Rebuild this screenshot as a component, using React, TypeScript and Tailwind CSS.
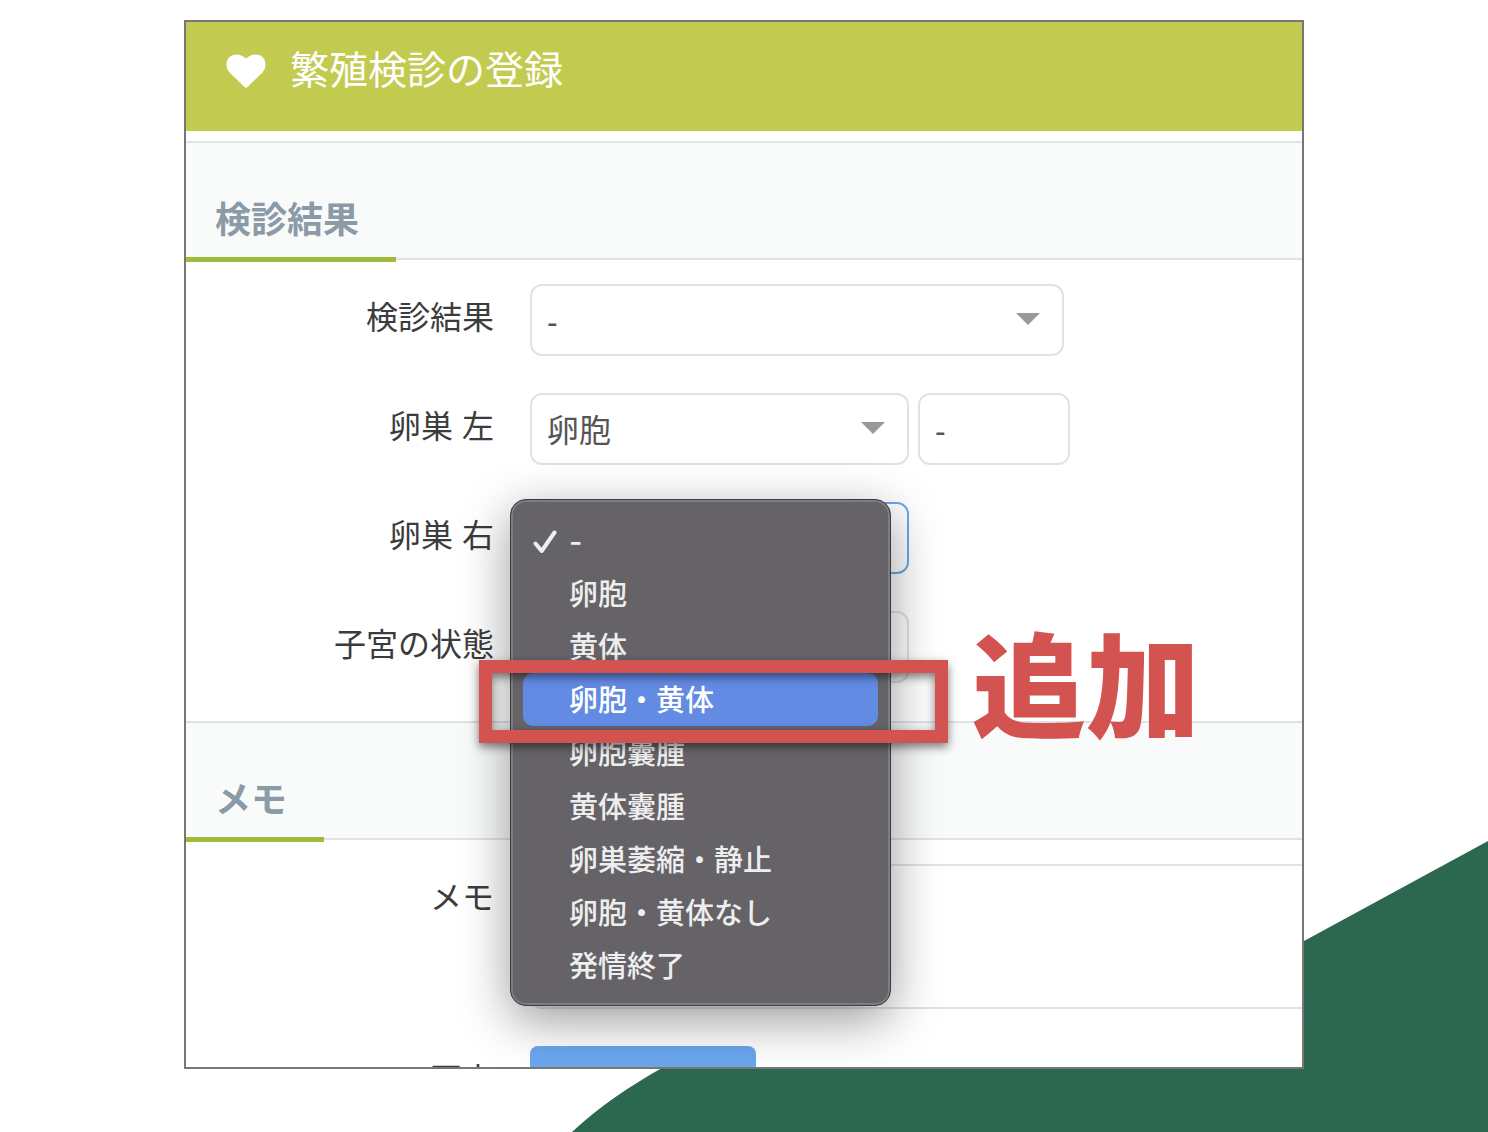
import type { ReactNode } from "react";

const ovaryOptions = [
  "-",
  "卵胞",
  "黄体",
  "卵胞・黄体",
  "卵胞囊腫",
  "黄体囊腫",
  "卵巣萎縮・静止",
  "卵胞・黄体なし",
  "発情終了",
];

function SectionHeading({ children }: { children: ReactNode }) {
  return (
    <div className="flex h-[119px] items-end border-y-2 border-[#dfe3e6] bg-[#f9fafa]">
      <h2 className="-mb-1 border-b-5 border-[#a0ba3a] pr-[37px] pb-2 pl-[29px] text-[36px] leading-[56px] font-bold text-[#8b9aa7]">
        {children}
      </h2>
    </div>
  );
}

function Row({ id, label, children }: { id: string; label: string; children: ReactNode }) {
  return (
    <div className="flex items-start">
      <label
        htmlFor={id}
        className="w-[344px] shrink-0 pt-2.5 pr-9 text-right text-[32px] leading-[48px] text-[#3c3c3c]"
      >
        {label}
      </label>
      {children}
    </div>
  );
}

function Select({
  id,
  options,
  value,
  wide = false,
  focused = false,
}: {
  id: string;
  options: string[];
  value: string;
  wide?: boolean;
  focused?: boolean;
}) {
  return (
    <div className={wide ? "relative w-[534px]" : "relative w-[379px]"}>
      <select
        id={id}
        defaultValue={value}
        className={
          "h-[72px] w-full appearance-none rounded-xl border-2 bg-white px-[15px] pt-1 text-[32px] text-[#555] outline-none " +
          (focused ? "border-[#6aa8ef]" : "border-[#dfe3e6]")
        }
      >
        {options.map((o) => (
          <option key={o}>{o}</option>
        ))}
      </select>
      <svg
        viewBox="0 0 24 12"
        className="pointer-events-none absolute top-[29px] right-6 h-3 w-6 fill-[#999]"
        aria-hidden="true"
      >
        <path d="M0 0h24L12 12z" />
      </svg>
    </div>
  );
}

function Highlight() {
  return (
    <div className="pointer-events-none absolute -top-[13px] -right-[70px] -bottom-[17px] -left-11">
      <div className="absolute inset-0 border-[13px] border-[#d35350] drop-shadow-[0_4px_5px_rgba(0,0,0,0.5)]" />
      <strong className="absolute -top-[88px] left-full ml-6 text-[114px] leading-[232px] font-black whitespace-nowrap text-[#d35350]">
        追加
      </strong>
    </div>
  );
}

function OptionMenu() {
  return (
    <ul
      role="listbox"
      aria-label="卵巣 右"
      className="absolute -top-[3px] -left-5 z-10 flex h-[507px] w-[381px] flex-col rounded-2xl border border-[#3c3c3e] bg-[#656368] px-3 py-[13px] font-[Inter,'Noto_Sans_CJK_JP',sans-serif] text-[29px] font-medium text-[#eeeeee] shadow-[inset_0_0_0_2px_#7e7d80,0_14px_50px_rgba(0,0,0,0.4)]"
    >
      {ovaryOptions.map((o, i) => (
        <li
          key={o}
          role="option"
          aria-selected={i === 0}
          className={
            "relative flex flex-1 items-center rounded-[10px] pt-1 pl-[46px] leading-[48px] " +
            (i === 3 ? "z-10 bg-[#638be4] text-white" : "")
          }
        >
          {i === 0 && (
            <svg
              viewBox="0 0 24 24"
              className="absolute left-2.5 size-6 fill-none stroke-current stroke-[4]"
              strokeLinecap="round"
              strokeLinejoin="round"
              aria-hidden="true"
            >
              <path d="M2.5 13.5 8.7 21 21.5 2.5" />
            </svg>
          )}
          {o}
          {i === 3 && <Highlight />}
        </li>
      ))}
    </ul>
  );
}

export default function App() {
  return (
    <div
      lang="ja"
      className="relative flex h-screen flex-col overflow-hidden bg-white px-[184px] pt-5 pb-[63px] font-['Liberation_Sans','Noto_Sans_CJK_JP',sans-serif]"
    >
      <svg
        viewBox="0 0 916 291"
        className="absolute right-0 bottom-0 h-[291px] w-[916px] fill-[#2b684f]"
        aria-hidden="true"
      >
        <path d="M0 291C28 265 58 245 90 227C250 140 520 215 732 100L916 0V291Z" />
      </svg>

      <main className="relative min-h-0 flex-1 overflow-hidden border-2 border-[#777] bg-white">
        <header className="flex h-[109px] items-center bg-[#c2cb50] pb-3 pl-10 text-white">
          <svg viewBox="0 0 40 34" className="h-[34px] w-10 fill-current" aria-hidden="true">
            <path d="M20 34C19.4 34 18.9 33.500 18.500 33.100L4 19C1.800 16.600.5 14 .5 10.800C.5 4.500 4.500.5 10.600.5 14.200.5 17.600 2.200 20 4.600 22.400 2.200 25.800.5 29.400.5 35.500.5 39.500 4.500 39.500 10.800 39.500 14 38.200 16.600 36 19L21.500 33.100C21.100 33.500 20.600 34 20 34Z" />
          </svg>
          <h1 className="ml-6 text-[39px] leading-[60px]">繁殖検診の登録</h1>
        </header>

        <form className="pt-2.5">
          <SectionHeading>検診結果</SectionHeading>
          <div className="flex flex-col gap-[37px] pt-6 pb-[38px]">
            <Row id="result" label="検診結果">
              <Select id="result" options={["-"]} value="-" wide />
            </Row>
            <Row id="left-ovary" label="卵巣 左">
              <Select id="left-ovary" options={ovaryOptions} value="卵胞" />
              <input
                type="text"
                aria-label="卵巣 左 サイズ"
                defaultValue="-"
                className="ml-[9px] h-[72px] w-[152px] rounded-xl border-2 border-[#dfe3e6] bg-white px-[15px] pt-1 text-[32px] text-[#555] outline-none"
              />
            </Row>
            <Row id="right-ovary" label="卵巣 右">
              <div className="relative">
                <Select id="right-ovary" options={ovaryOptions} value="-" focused />
                <OptionMenu />
              </div>
            </Row>
            <Row id="uterus" label="子宮の状態">
              <Select id="uterus" options={["-"]} value="-" />
            </Row>
          </div>

          <SectionHeading>メモ</SectionHeading>
          <div className="flex flex-col gap-[37px] pt-6">
            <Row id="memo" label="メモ">
              <textarea
                id="memo"
                className="-mr-4 h-[145px] min-w-0 flex-1 resize-none rounded-xl border-2 border-[#dfe3e6] bg-white p-4 text-[32px] outline-none"
              />
            </Row>
            <Row id="photo" label="写真">
              <button id="photo" type="button" aria-label="写真を選択" className="h-[72px] w-[226px] rounded-lg bg-[#6ba6ed]" />
            </Row>
          </div>
        </form>
      </main>
    </div>
  );
}
